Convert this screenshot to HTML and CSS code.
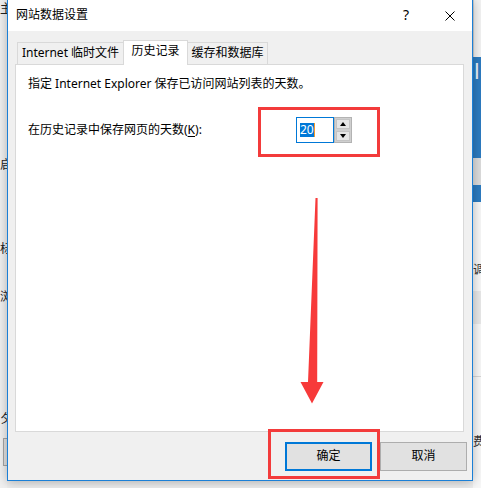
FILE: index.html
```html
<!DOCTYPE html>
<html lang="zh-CN">
<head>
<meta charset="utf-8">
<title>网站数据设置</title>
<link rel="stylesheet" href="styles.css">
</head>
<body>
<div class="screen">
  <div class="bg-left">
    <span class="g g1">主</span>
    <span class="g g2">启</span>
    <span class="g g3">标</span>
    <span class="g g4">浏</span>
    <span class="g g5">夕</span>
    <div class="bg-btn"></div>
  </div>

  <div class="dialog">
    <div class="titlebar">
      <span class="title">网站数据设置</span>
      <span class="cap help">?</span>
      <span class="cap close">
        <svg width="10" height="10" viewBox="0 0 10 10"><path d="M0.5 0.5 L9.5 9.5 M9.5 0.5 L0.5 9.5" stroke="#000" stroke-width="1" fill="none"/></svg>
      </span>
    </div>
    <div class="content">
      <div class="tabs">
        <div class="tab tab1">Internet 临时文件</div>
        <div class="tab tab2 active">历史记录</div>
        <div class="tab tab3">缓存和数据库</div>
      </div>
      <div class="panel">
        <p class="desc">指定 Internet Explorer 保存已访问网站列表的天数。</p>
        <div class="row">
          <label class="lbl">在历史记录中保存网页的天数(<u>K</u>):</label>
          <div class="spin">
            <div class="spin-input"><span class="sel">20</span><span class="caret"></span></div>
            <div class="spin-btns">
              <div class="sbtn"><span class="tri up"></span></div>
              <div class="sbtn"><span class="tri down"></span></div>
            </div>
          </div>
        </div>
      </div>
      <div class="buttons">
        <button class="btn default">确定</button>
        <button class="btn">取消</button>
      </div>
    </div>
  </div>

  <div class="bg-right">
    <div class="r-top"></div>
    <div class="r-blue"><span class="r-glyph">l</span></div>
    <div class="r-gray"></div>
    <div class="r-blue2"></div>
    <div class="r-rest">
      <span class="rg rg1">调</span>
      <div class="r-band"></div>
      <div class="r-line"></div>
      <span class="rg rg2">费</span>
    </div>
  </div>

  <div class="mark mark1"></div>
  <div class="mark mark2"></div>
  <svg class="arrow" width="481" height="488" viewBox="0 0 481 488">
    <polygon points="315.5,198 317.6,198 317.2,382 323.5,382 312,403.5 300.5,382 308,382" fill="#f73a3a"/>
  </svg>
</div>
</body>
</html>
```

FILE: styles.css
```css
* { box-sizing: border-box; }
html, body { margin: 0; padding: 0; }
body {
  width: 481px;
  height: 488px;
  overflow: hidden;
  background: #f0f0f0;
  font: 12px/16px "Noto Sans", "Noto Sans CJK SC", sans-serif;
  color: #000;
}
.screen {
  position: relative;
  display: flex;
  width: 481px;
  height: 488px;
  overflow: hidden;
  background: #ededed;
}

/* background window fragments */
.bg-left {
  width: 7px;
  flex: none;
  overflow: hidden;
  background: #f0f0f0;
  font-family: "Noto Sans CJK SC", sans-serif;
}
.g { display: block; width: 14px; line-height: 12px; font-size: 12px; color: #222; }
.g1 { margin-top: 2px; }
.g2 { margin-top: 144px; }
.g3 { margin-top: 72px; }
.g4 { margin-top: 36px; }
.g5 { margin-top: 110px; }
.bg-btn {
  margin: 14px 0 0 3px;
  width: 12px;
  height: 28px;
  border: 1px solid #a5a5a5;
  background: #e1e1e1;
}
.bg-right {
  width: 8px;
  flex: none;
  display: flex;
  flex-direction: column;
  overflow: hidden;
  font-family: "Noto Sans CJK SC", sans-serif;
}
.r-top { height: 57px; background: #f2f2f2; border-left: 1px solid #d0d0d0; }
.r-blue { height: 101px; background: #2c7bc0; color: #e8f1fa; }
.r-glyph { display: block; margin: 0 0 0 1px; font: 22px/26px "Noto Sans", sans-serif; }
.r-gray { height: 27px; background: #dcdcdc; }
.r-blue2 { height: 17px; background: #2c7bc0; }
.r-rest { flex: 1; background: #f7f7f7; }
.rg { display: block; width: 14px; font-size: 12px; line-height: 12px; color: #333; }
.rg1 { margin-top: 61px; }
.r-band { margin-top: 16px; height: 33px; background: #e8e8e8; }
.r-line { margin-top: 52px; height: 1px; background: #d6d6d6; }
.rg2 { margin-top: 58px; }

/* dialog */
.dialog {
  flex: none;
  align-self: flex-start;
  width: 466px;
  height: 482px;
  margin-top: -1px;
  border: 1px solid #1b7fd6;
  background: #f0f0f0;
  display: flex;
  flex-direction: column;
  position: relative;
  z-index: 1;
  box-shadow: 0 1px 10px rgba(0, 0, 0, 0.28);
}
.titlebar {
  flex: none;
  height: 31px;
  background: #fff;
  display: flex;
  align-items: center;
}
.title { flex: 1; padding-left: 8px; padding-bottom: 1px; }
.cap {
  width: 44px;
  height: 31px;
  display: flex;
  align-items: center;
  justify-content: center;
}
.help { font-size: 14px; padding-bottom: 1px; }
.close svg { display: block; }

.content {
  flex: 1;
  padding: 9px 8px 0 7px;
  display: flex;
  flex-direction: column;
}
.tabs {
  display: flex;
  align-items: flex-end;
  height: 25px;
  margin-bottom: -1px;
  padding-left: 2px;
  position: relative;
  z-index: 1;
}
.tab {
  height: 22px;
  margin-bottom: 1px;
  border: 1px solid #d9d9d9;
  border-bottom: none;
  background: #f0f0f0;
  text-align: center;
  line-height: 20px;
  white-space: nowrap;
}
.tab1 { width: 107px; }
.tab2 { width: 65px; margin-left: -1px; }
.tab3 { width: 81px; margin-left: -1px; }
.tab.active {
  height: 25px;
  margin-bottom: 0;
  background: #fff;
  position: relative;
  z-index: 1;
}

.panel {
  height: 368px;
  border: 1px solid #d9d9d9;
  background: #fff;
  padding: 11px 12px 0 12px;
}
.desc { margin: 0; white-space: nowrap; }
.row {
  margin-top: 25px;
  display: grid;
  grid-template-columns: 268px auto;
  align-items: center;
}
.lbl { white-space: nowrap; padding-bottom: 1px; }
.lbl u { text-underline-offset: 2px; }

.spin { display: flex; height: 26px; }
.spin-input {
  width: 38px;
  height: 26px;
  border: 1px solid #0078d7;
  background: #fff;
  padding-left: 3px;
  display: flex;
  align-items: center;
}
.sel {
  background: #0078d7;
  color: #fff;
  line-height: 14px;
  height: 14px;
}
.caret { width: 1px; height: 14px; background: #f39a2a; }
.spin-btns {
  width: 18px;
  height: 26px;
  border: 1px solid #b3b3b3;
  background: #cfcfcf;
  padding: 1px;
  display: flex;
  flex-direction: column;
  gap: 2px;
}
.sbtn {
  flex: 1;
  background: #e6e6e6;
  border: 1px solid #c4c4c4;
  display: flex;
  align-items: center;
  justify-content: center;
}
.tri { width: 0; height: 0; border-left: 3.5px solid transparent; border-right: 3.5px solid transparent; }
.tri.up { border-bottom: 4px solid #000; }
.tri.down { border-top: 4px solid #000; }

.buttons {
  display: flex;
  justify-content: flex-end;
  gap: 8px;
  margin: 10px -3px 0 0;
}
.btn {
  width: 87px;
  height: 29px;
  margin: 0;
  padding: 0 0 1px;
  border: 1px solid #adadad;
  border-radius: 0;
  background: #e1e1e1;
  font: 12px/16px "Noto Sans", "Noto Sans CJK SC", sans-serif;
  color: #000;
}
.btn.default { border: 2px solid #0078d7; }

/* annotations */
.mark {
  position: absolute;
  z-index: 5;
  border: 3px solid #f33b3b;
}
.mark1 { left: 258px; top: 107px; width: 122px; height: 50px; }
.mark2 { left: 268px; top: 429px; width: 112px; height: 50px; }
.arrow { position: absolute; left: 0; top: 0; z-index: 5; }
```
